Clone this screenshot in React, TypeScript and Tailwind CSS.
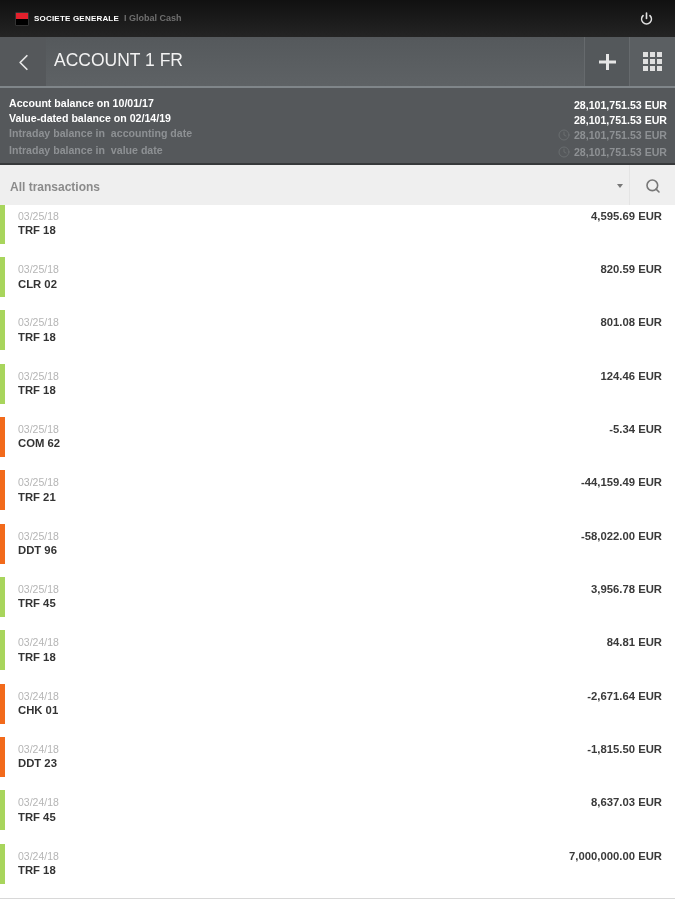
import { ChevronLeft, Clock, Power, Search } from "lucide-react";

type Transaction = {
  date: string;
  code: string;
  amount: string;
};

const balances = [
  { label: "Account balance on 10/01/17", amount: "28,101,751.53 EUR", live: false },
  { label: "Value-dated balance on 02/14/19", amount: "28,101,751.53 EUR", live: false },
  { label: "Intraday balance in  accounting date", amount: "28,101,751.53 EUR", live: true },
  { label: "Intraday balance in  value date", amount: "28,101,751.53 EUR", live: true },
];

const transactions: Transaction[] = [
  { date: "03/25/18", code: "TRF 18", amount: "4,595.69 EUR" },
  { date: "03/25/18", code: "CLR 02", amount: "820.59 EUR" },
  { date: "03/25/18", code: "TRF 18", amount: "801.08 EUR" },
  { date: "03/25/18", code: "TRF 18", amount: "124.46 EUR" },
  { date: "03/25/18", code: "COM 62", amount: "-5.34 EUR" },
  { date: "03/25/18", code: "TRF 21", amount: "-44,159.49 EUR" },
  { date: "03/25/18", code: "DDT 96", amount: "-58,022.00 EUR" },
  { date: "03/25/18", code: "TRF 45", amount: "3,956.78 EUR" },
  { date: "03/24/18", code: "TRF 18", amount: "84.81 EUR" },
  { date: "03/24/18", code: "CHK 01", amount: "-2,671.64 EUR" },
  { date: "03/24/18", code: "DDT 23", amount: "-1,815.50 EUR" },
  { date: "03/24/18", code: "TRF 45", amount: "8,637.03 EUR" },
  { date: "03/24/18", code: "TRF 18", amount: "7,000,000.00 EUR" },
];

function TransactionRow({ item }: { item: Transaction }) {
  const debit = item.amount.startsWith("-");

  return (
    <div className="flex h-[53.33px] shrink-0">
      <div className={`h-10 w-[5px] ${debit ? "bg-[#f26a1b]" : "bg-[#a8d55c]"}`} />
      <div className="ml-[13px] flex-1 pt-[6px]">
        <p className="text-[10.5px] leading-[13px] text-[#b5b5b5]">{item.date}</p>
        <p className="mt-[0.5px] text-[11.3px] leading-[14px] font-bold text-[#333]">{item.code}</p>
      </div>
      <p className="pt-[5px] pr-[13px] text-[11.3px] leading-[14px] font-bold text-[#3a3a3a]">
        {item.amount}
      </p>
    </div>
  );
}

export default function App() {
  return (
    <div className="flex h-[900px] w-[675px] flex-col overflow-hidden bg-white font-['Liberation_Sans',Arial,sans-serif] blur-[0.4px]">
      <header className="flex h-[37px] shrink-0 items-center justify-between bg-gradient-to-b from-[#111] to-[#242424] pr-[22px] pl-[15px]">
        <div className="flex items-center">
          <div className="h-[14px] w-[14px] overflow-hidden rounded-[1px] border border-[#333]">
            <div className="h-1/2 bg-[#e2202c]" />
            <div className="h-1/2 bg-black" />
          </div>
          <span className="ml-[5px] text-[8px] font-bold tracking-[0.2px] text-white">
            SOCIETE GENERALE
          </span>
          <span className="ml-[5px] text-[9px] font-bold text-[#6f6f6f]">I Global Cash</span>
        </div>
        <Power size={13} strokeWidth={3} className="text-[#e0e0e0]" />
      </header>

      <div className="flex h-[51px] shrink-0 border-b-2 border-[#80868a] bg-gradient-to-b from-[#55595c] to-[#5e6265]">
        <div className="flex w-[46px] items-center justify-center bg-[#55585b] pt-[2px]">
          <ChevronLeft size={27} strokeWidth={1.5} className="ml-[1px] text-[#e8e8e8]" />
        </div>
        <h1 className="flex-1 pt-[10px] pl-[8px] text-[17.5px] leading-[26px] text-[#f2f2f2]">
          ACCOUNT 1 FR
        </h1>
        <div className="flex w-[46px] items-center justify-center border-r border-l border-[#666a6d] bg-[#54585b]">
          <svg width="17" height="16" viewBox="0 0 17 16" aria-hidden="true">
            <path d="M7 0h3v6.5h7v3h-7V16H7V9.5H0v-3h7z" fill="#e6e6e6" />
          </svg>
        </div>
        <div className="flex w-[45px] items-center justify-center bg-[#5b5f62]">
          <div className="grid grid-cols-3 gap-[2px]">
            {Array.from({ length: 9 }, (_, i) => (
              <span key={i} className="h-[5px] w-[5px] bg-[#e0e0e0]" />
            ))}
          </div>
        </div>
      </div>

      <section className="flex h-[77px] shrink-0 flex-col border-b-2 border-[#37393b] bg-[#55585b] pt-[8px] pr-[8px] pl-[9px]">
        {balances.map((row, index) => (
          <div
            key={row.label}
            className={`flex h-[15px] items-start justify-between text-[10.6px] leading-[15px] font-bold ${
              row.live ? "text-[#8e9194]" : "text-white"
            } ${index === 3 ? "mt-[2px]" : ""}`}
          >
            <span className="whitespace-pre">{row.label}</span>
            <span className="mt-[1.5px] flex items-center gap-[4px]">
              {row.live && <Clock size={12} strokeWidth={1} className="text-[#7d8083]" />}
              {row.amount}
            </span>
          </div>
        ))}
      </section>

      <div className="relative z-10 flex h-[40px] shrink-0 items-center bg-[#efefef]">
        <span className="flex-1 pt-[4px] pl-[10px] text-[12px] font-bold text-[#8b8b8b]">All transactions</span>
        <span className="mt-[2px] mr-[6px] h-0 w-0 border-x-[3px] border-t-[4px] border-x-transparent border-t-[#777]" />
        <div className="flex h-full w-[46px] items-center justify-center border-l border-[#e4e4e4] pt-[2px]">
          <Search size={16} strokeWidth={2.4} className="text-[#777]" />
        </div>
      </div>

      <div className="-mt-[1.33px] flex flex-1 flex-col overflow-hidden">
        {transactions.map((item, index) => (
          <TransactionRow key={index} item={item} />
        ))}
        <div className="mt-px border-t border-[#d8d8d8]" />
      </div>
    </div>
  );
}
